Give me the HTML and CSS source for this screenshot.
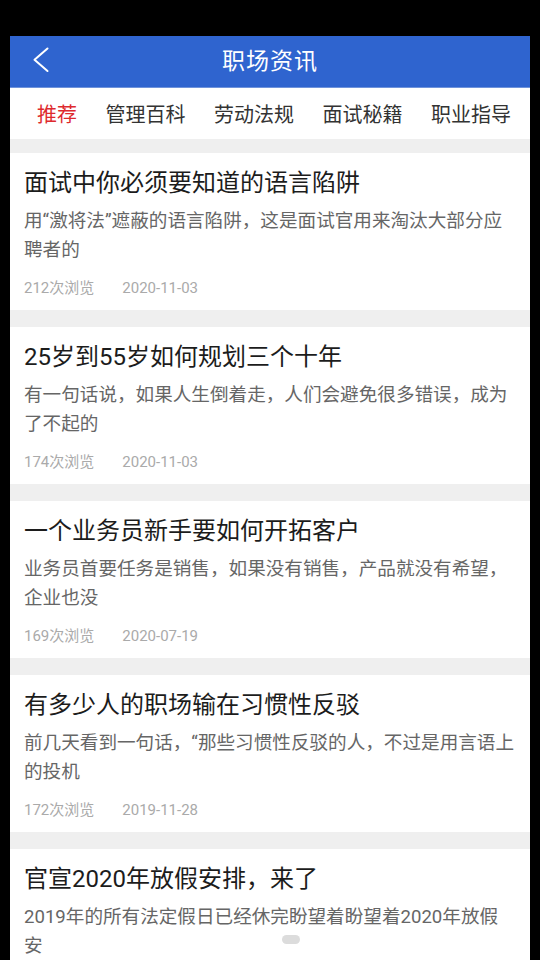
FILE: index.html
```html
<!DOCTYPE html>
<html lang="zh-CN">
<head>
<meta charset="utf-8">
<title>职场资讯</title>
<link rel="stylesheet" href="styles.css">
</head>
<body>
<div class="screen">
  <header class="topbar">
    <span class="back">
      <svg width="16" height="26" viewBox="0 0 16 26"><path d="M14.5 1.5 L1.5 12.8 L14.5 24" fill="none" stroke="#fff" stroke-width="2" stroke-linecap="round" stroke-linejoin="round"/></svg>
    </span>
    <h1 class="title">职场资讯</h1>
  </header>
  <nav class="tabs">
    <span class="tab active">推荐</span>
    <span class="tab">管理百科</span>
    <span class="tab">劳动法规</span>
    <span class="tab">面试秘籍</span>
    <span class="tab">职业指导</span>
  </nav>
  <main class="list">
    <article class="card">
      <h2 class="card-title">面试中你必须要知道的语言陷阱</h2>
      <p class="card-desc">用“激将法”遮蔽的语言陷阱，这是面试官用来淘汰大部分应聘者的</p>
      <div class="meta"><span class="views">212次浏览</span><span class="date">2020-11-03</span></div>
    </article>
    <article class="card">
      <h2 class="card-title">25岁到55岁如何规划三个十年</h2>
      <p class="card-desc">有一句话说，如果人生倒着走，人们会避免很多错误，成为了不起的</p>
      <div class="meta"><span class="views">174次浏览</span><span class="date">2020-11-03</span></div>
    </article>
    <article class="card">
      <h2 class="card-title">一个业务员新手要如何开拓客户</h2>
      <p class="card-desc">业务员首要任务是销售，如果没有销售，产品就没有希望，企业也没</p>
      <div class="meta"><span class="views">169次浏览</span><span class="date">2020-07-19</span></div>
    </article>
    <article class="card">
      <h2 class="card-title">有多少人的职场输在习惯性反驳</h2>
      <p class="card-desc">前几天看到一句话，“那些习惯性反驳的人，不过是用言语上的投机</p>
      <div class="meta"><span class="views">172次浏览</span><span class="date">2019-11-28</span></div>
    </article>
    <article class="card">
      <h2 class="card-title">官宣2020年放假安排，来了</h2>
      <p class="card-desc">2019年的所有法定假日已经休完盼望着盼望着2020年放假安</p>
    </article>
  </main>
  <div class="pill"></div>
</div>
</body>
</html>
```
FILE: styles.css
```css
* { box-sizing: border-box; }
html, body {
  margin: 0;
  padding: 0;
  background: #000;
  height: 960px;
  overflow: hidden;
}
body {
  font-family: Roboto, "Noto Sans CJK SC", sans-serif;
}
.screen {
  position: relative;
  margin: 36px 10px 0;
  width: 520px;
  height: 924px;
  background: #efefef;
  overflow: hidden;
}
.topbar {
  height: 52px;
  background: #2f64cf;
  display: flex;
  align-items: center;
  justify-content: center;
  position: relative;
  border-bottom: 1px solid #6f93db;
}
.back {
  position: absolute;
  left: 23px;
  top: 11px;
  display: flex;
}
.title {
  margin: 0;
  color: #fff;
  font-size: 23px;
  font-weight: 400;
  letter-spacing: 1px;
  line-height: 52px;
}
.tabs {
  height: 51px;
  background: #fff;
  display: flex;
  align-items: center;
  gap: 28.5px;
  padding-left: 27px;
  font-size: 20px;
  color: #333;
}
.tab { white-space: nowrap; }
.tab.active { color: #de2a2e; }
.list {
  display: flex;
  flex-direction: column;
  gap: 17px;
  padding-top: 14px;
}
.card {
  background: #fff;
  padding: 14px 16px 12px 14px;
}
.card-title {
  margin: 0;
  font-size: 24px;
  font-weight: 400;
  line-height: 32px;
  color: #1c1c1c;
  white-space: nowrap;
}
.card-desc {
  margin: 8px 0 0;
  font-size: 18.6px;
  line-height: 29px;
  color: #666;
}
.meta {
  margin-top: 13px;
  font-size: 15px;
  line-height: 20px;
  color: #aaa;
  display: flex;
  gap: 28px;
}
.pill {
  position: absolute;
  left: 272px;
  top: 899px;
  width: 18px;
  height: 9px;
  border-radius: 5px;
  background: #dcdcdc;
}
```
